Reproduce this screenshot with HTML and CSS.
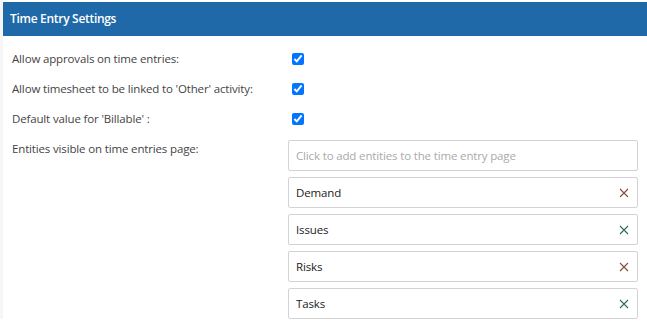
FILE: index.html
```html
<!DOCTYPE html>
<html lang="en">
<head>
    <meta charset="UTF-8">
    <meta name="viewport" content="width=device-width, initial-scale=1.0">
    <title>Time Entry Settings</title>
    <link rel="stylesheet" href="styles.css">
</head>
<body>
    <div class="panel">
        <div class="panel-header">Time Entry Settings</div>
        <div class="panel-body">
            <div class="setting-row">
                <label class="setting-label">Allow approvals on time entries:</label>
                <div class="setting-value"><input type="checkbox" checked></div>
            </div>
            <div class="setting-row">
                <label class="setting-label">Allow timesheet to be linked to 'Other' activity:</label>
                <div class="setting-value"><input type="checkbox" checked></div>
            </div>
            <div class="setting-row">
                <label class="setting-label">Default value for 'Billable' :</label>
                <div class="setting-value"><input type="checkbox" checked></div>
            </div>
            <div class="setting-row entities-row">
                <label class="setting-label">Entities visible on time entries page:</label>
                <div class="entity-list">
                    <input class="entity-input" type="text" placeholder="Click to add entities to the time entry page">
                    <div class="entity-item">
                        <span>Demand</span>
                        <svg class="remove-icon" width="10" height="10" viewBox="0 0 10 10"><path d="M1 1L9 9M9 1L1 9" stroke="#8a4a3c" stroke-width="1.1"/></svg>
                    </div>
                    <div class="entity-item">
                        <span>Issues</span>
                        <svg class="remove-icon" width="10" height="10" viewBox="0 0 10 10"><path d="M1 1L9 9M9 1L1 9" stroke="#2f6a5c" stroke-width="1.1"/></svg>
                    </div>
                    <div class="entity-item">
                        <span>Risks</span>
                        <svg class="remove-icon" width="10" height="10" viewBox="0 0 10 10"><path d="M1 1L9 9M9 1L1 9" stroke="#8a4a3c" stroke-width="1.1"/></svg>
                    </div>
                    <div class="entity-item">
                        <span>Tasks</span>
                        <svg class="remove-icon" width="10" height="10" viewBox="0 0 10 10"><path d="M1 1L9 9M9 1L1 9" stroke="#2f6a5c" stroke-width="1.1"/></svg>
                    </div>
                </div>
            </div>
        </div>
    </div>
</body>
</html>
```

FILE: styles.css
```css
body {
    font-family: "Open Sans", "Noto Sans", Arial, sans-serif;
    background-color: #fff;
    margin: 0;
    padding: 0;
}

.panel {
    border-left: 3px solid #f6f6f6;
    padding-top: 2px;
}

.panel-header {
    background-color: #1f69a8;
    color: #fff;
    font-weight: 600;
    font-size: 12px;
    letter-spacing: -0.3px;
    height: 34px;
    line-height: 34px;
    padding-left: 7px;
}

.panel-body {
    padding: 8px 9px 0 9px;
}

.setting-row {
    display: flex;
    align-items: center;
    height: 30px;
}

.setting-label {
    width: 276px;
    font-size: 11.5px;
    letter-spacing: -0.15px;
    color: #444;
    line-height: 18px;
}

.setting-value input {
    margin: 0 0 0 4px;
    width: 12px;
    height: 12px;
}

.entities-row {
    align-items: flex-start;
    height: auto;
    margin-top: 6px;
}

.entity-list {
    flex: 1;
    display: flex;
    flex-direction: column;
    gap: 6px;
}

.entity-input,
.entity-item {
    box-sizing: border-box;
    height: 31px;
    border: 1px solid #d3d3d3;
    border-radius: 2px;
    padding: 0 8px 0 7px;
    font-family: inherit;
    font-size: 11.5px;
    letter-spacing: -0.15px;
    color: #222;
    background: #fff;
}

.entity-input::placeholder {
    color: #aaa;
}

.entity-item {
    display: flex;
    align-items: center;
    justify-content: space-between;
}

.remove-icon {
    display: block;
}
```
